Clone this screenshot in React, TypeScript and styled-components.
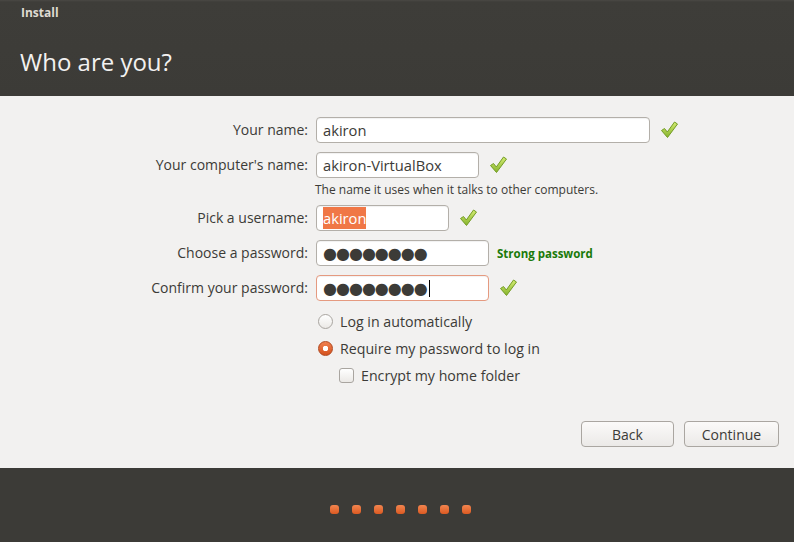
import styled, { createGlobalStyle } from "styled-components";

const Global = createGlobalStyle`
  html, body { margin: 0; padding: 0; }
  body {
    width: 794px;
    height: 542px;
    overflow: hidden;
    font-family: "Open Sans", "DejaVu Sans", sans-serif;
    color: #3c3b37;
    background: #3c3b37;
  }
`;

const Window = styled.div`
  width: 794px;
  height: 542px;
  display: flex;
  flex-direction: column;
`;

const Header = styled.header`
  height: 96px;
  box-sizing: border-box;
  background: linear-gradient(#4a4844 0px, #3e3d39 2px, #3c3b37 100%);
  padding: 5px 20px 0 20px;
  display: flex;
  flex-direction: column;
`;

const WindowTitle = styled.div`
  font-size: 12px;
  font-weight: 700;
  color: #dfdbd2;
  padding-left: 1px;
  line-height: 16px;
`;

const PageTitle = styled.h1`
  margin: 26px 0 0 0;
  font-size: 24px;
  font-weight: 400;
  color: #f2f1f0;
  line-height: 30px;
`;

const Content = styled.main`
  flex: 1;
  background: #f2f1f0;
  display: flex;
  flex-direction: column;
  padding: 21px 15px 21px 0;
`;

const Form = styled.div`
  display: grid;
  grid-template-columns: 308px 1fr;
  column-gap: 8px;
  row-gap: 9px;
  align-items: center;
`;

const Label = styled.label`
  text-align: right;
  font-size: 14px;
  line-height: 26px;
  white-space: nowrap;
`;

const Field = styled.div`
  display: flex;
  align-items: center;
  gap: 9px;
`;

const Input = styled.div<{ $width: number; $error?: boolean }>`
  width: ${(p) => p.$width}px;
  height: 26px;
  box-sizing: border-box;
  border: 1px solid ${(p) => (p.$error ? "#e59a80" : "#b3afa9")};
  border-radius: 4px;
  background: #fff;
  box-shadow: inset 0 1px 1px rgba(0, 0, 0, 0.06);
  padding: 0 6px;
  display: flex;
  align-items: center;
  font-size: 14.7px;
  color: #3c3b37;
  white-space: nowrap;
`;

const Selected = styled.span`
  background: #f07746;
  color: #fff;
  padding: 1px 0;
  line-height: 20px;
`;

const Dots = styled.span`
  font-family: "DejaVu Sans", sans-serif;
  font-size: 16px;
  letter-spacing: -1px;
  color: #3c3b37;
`;

const Caret = styled.span`
  display: inline-block;
  width: 1px;
  height: 17px;
  background: #000;
  margin-left: 2px;
`;

const Hint = styled.div`
  grid-column: 2;
  font-size: 12px;
  margin: -4px 0 -1px -1px;
  line-height: 14px;
`;

const Strength = styled.span`
  font-size: 11.5px;
  font-weight: 700;
  color: #1a7a0a;
  margin-left: -1px;
`;

const Options = styled.div`
  margin: 11px 0 0 318px;
  display: flex;
  flex-direction: column;
  gap: 9px;
`;

const Option = styled.div<{ $indent?: number }>`
  display: flex;
  align-items: center;
  gap: 7px;
  font-size: 14.2px;
  height: 18px;
  margin-left: ${(p) => p.$indent ?? 0}px;
`;

const Radio = styled.span<{ $on?: boolean }>`
  width: 15px;
  height: 15px;
  box-sizing: border-box;
  border-radius: 50%;
  border: 1px solid ${(p) => (p.$on ? "#b0461d" : "#a9a5a0")};
  background: ${(p) =>
    p.$on
      ? "radial-gradient(circle, #fff 0 2.5px, transparent 3px), linear-gradient(#f0804f, #d4521d)"
      : "linear-gradient(#ffffff, #ebe9e6)"};
`;

const Check = styled.span`
  width: 15px;
  height: 15px;
  box-sizing: border-box;
  border-radius: 3px;
  border: 1px solid #a9a5a0;
  background: linear-gradient(#ffffff, #ebe9e6);
`;

const Buttons = styled.div`
  margin-top: auto;
  display: flex;
  justify-content: flex-end;
  gap: 10px;
`;

const Button = styled.button<{ $width: number }>`
  width: ${(p) => p.$width}px;
  height: 26px;
  border: 1px solid #aaa6a1;
  border-radius: 4px;
  background: linear-gradient(#fbfaf9, #ebe9e7);
  font-family: inherit;
  font-size: 14px;
  color: #3c3b37;
  padding: 0;
`;

const Footer = styled.footer`
  height: 74px;
  box-sizing: border-box;
  background: #3c3b37;
  display: flex;
  justify-content: center;
  align-items: center;
  gap: 13px;
  padding: 8px 0 0 7px;
`;

const Dot = styled.span`
  width: 9px;
  height: 9px;
  border-radius: 3px;
  background: linear-gradient(#f2854f, #dc5a22);
`;

const Tick = () => (
  <svg width="20" height="20" viewBox="0 0 20 20">
    <defs>
      <linearGradient id="tg" x1="0" y1="0" x2="0" y2="1">
        <stop offset="0" stopColor="#d4ec72" />
        <stop offset="1" stopColor="#86b32c" />
      </linearGradient>
    </defs>
    <path
      d="M2.5 10.5 L5.5 8.5 L8.3 12 L15.5 2 L18.5 4 L8.5 17.5 Z"
      fill="url(#tg)"
      stroke="#739c25"
      strokeWidth="1"
      strokeLinejoin="round"
    />
  </svg>
);

export default function App() {
  return (
    <Window>
      <Global />
      <Header>
        <WindowTitle>Install</WindowTitle>
        <PageTitle>Who are you?</PageTitle>
      </Header>
      <Content>
        <Form>
          <Label>Your name:</Label>
          <Field>
            <Input $width={334}>akiron</Input>
            <Tick />
          </Field>
          <Label>Your computer's name:</Label>
          <Field>
            <Input $width={163}>akiron-VirtualBox</Input>
            <Tick />
          </Field>
          <Hint>The name it uses when it talks to other computers.</Hint>
          <Label>Pick a username:</Label>
          <Field>
            <Input $width={133}>
              <Selected>akiron</Selected>
            </Input>
            <Tick />
          </Field>
          <Label>Choose a password:</Label>
          <Field>
            <Input $width={173}>
              <Dots>●●●●●●●●</Dots>
            </Input>
            <Strength>Strong password</Strength>
          </Field>
          <Label>Confirm your password:</Label>
          <Field>
            <Input $width={173} $error>
              <Dots>●●●●●●●●</Dots>
              <Caret />
            </Input>
            <Tick />
          </Field>
        </Form>
        <Options>
          <Option>
            <Radio />
            Log in automatically
          </Option>
          <Option>
            <Radio $on />
            Require my password to log in
          </Option>
          <Option $indent={21}>
            <Check />
            Encrypt my home folder
          </Option>
        </Options>
        <Buttons>
          <Button $width={93}>Back</Button>
          <Button $width={95}>Continue</Button>
        </Buttons>
      </Content>
      <Footer>
        {Array.from({ length: 7 }).map((_, i) => (
          <Dot key={i} />
        ))}
      </Footer>
    </Window>
  );
}
